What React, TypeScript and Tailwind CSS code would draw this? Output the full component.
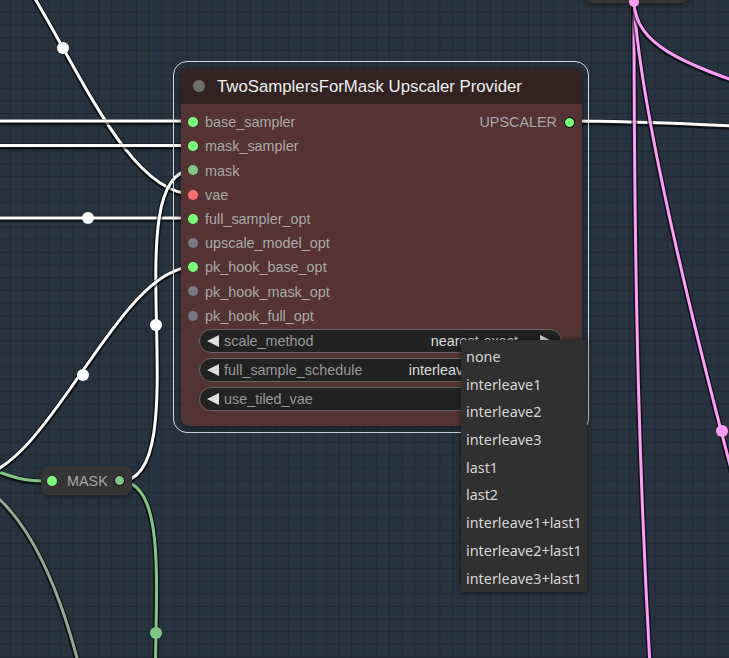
import React from 'react';

const SLOTS = [
  { name: 'base_sampler', color: '#77ff77' },
  { name: 'mask_sampler', color: '#77ff77' },
  { name: 'mask', color: '#81c784' },
  { name: 'vae', color: '#ff6e6e' },
  { name: 'full_sampler_opt', color: '#77ff77' },
  { name: 'upscale_model_opt', color: '#777788' },
  { name: 'pk_hook_base_opt', color: '#77ff77' },
  { name: 'pk_hook_mask_opt', color: '#777788' },
  { name: 'pk_hook_full_opt', color: '#777788' },
];

// the last widget's value sits under the open menu, so it is left blank
const WIDGETS = [
  { label: 'scale_method', value: 'nearest-exact' },
  { label: 'full_sample_schedule', value: 'interleave1+last1' },
  { label: 'use_tiled_vae', value: '' },
];

const OPTIONS = [
  'none',
  'interleave1',
  'interleave2',
  'interleave3',
  'last1',
  'last2',
  'interleave1+last1',
  'interleave2+last1',
  'interleave3+last1',
];

function Wire({ d, color }: { d: string; color: string }) {
  return (
    <g>
      <path d={d} fill="none" stroke="rgba(0,0,0,0.6)" strokeWidth={6} transform="translate(0,1)" />
      <path d={d} fill="none" stroke={color} strokeWidth={3} />
    </g>
  );
}

function Wires() {
  return (
    <svg className="absolute inset-0" width={729} height={658} viewBox="0 0 729 658">
      <line x1={157} y1={0} x2={157} y2={658} stroke="#25335a" strokeWidth={1} />
      {/* sage wire bottom-left */}
      <Wire d="M -60 470 C 10 478, 55 560, 85 690" color="#93a993" />
      {/* green into MASK */}
      <Wire d="M -50 455 C 0 470, 10 481, 45 481" color="#81c784" />
      {/* MASK output going down */}
      <Wire d="M 120 481 C 198 481, 114 785, 192 785" color="#81c784" />
      {/* white links */}
      <Wire d="M -67 -98 C 31 -98, 95 194, 193 194" color="#ffffff" />
      <Wire d="M 0 121 L 193 121" color="#ffffff" />
      <Wire d="M 0 145.5 L 193 145.5" color="#ffffff" />
      <Wire d="M 0 218 L 193 218" color="#ffffff" />
      <Wire d="M 120 481 C 200 481, 113 170, 193 170" color="#ffffff" />
      <Wire d="M -30 478 C 47 478, 116 267, 193 267" color="#ffffff" />
      <Wire d="M 569 121 C 650 121, 700 125, 760 127" color="#ffffff" />
      {/* pink links */}
      <Wire d="M 634 2 C 634 300, 640 500, 652 700" color="#ff9cf9" />
      <Wire d="M 634 2 Q 642 140 750 540" color="#ff9cf9" />
      <Wire d="M 634 2 C 636 45, 680 62, 760 90" color="#ff9cf9" />
      {/* midpoints */}
      <circle cx={63} cy={48} r={6} fill="#ffffff" />
      <circle cx={88} cy={218} r={6} fill="#ffffff" />
      <circle cx={156} cy={325} r={6} fill="#ffffff" />
      <circle cx={83} cy={375} r={6} fill="#ffffff" />
      <circle cx={156} cy={633} r={6} fill="#81c784" />
      <circle cx={722} cy={431} r={6} fill="#ff9cf9" />
    </svg>
  );
}

function Arrow({ dir }: { dir: 'left' | 'right' }) {
  return (
    <svg width={12} height={12} viewBox="0 0 12 12" className="shrink-0">
      {dir === 'left' ? <polygon points="12,0 12,12 0,6" fill="#dddddd" /> : <polygon points="0,0 0,12 12,6" fill="#dddddd" />}
    </svg>
  );
}

function Widget({ label, value }: { label: string; value: string }) {
  return (
    <div className="ml-[18px] flex h-[24px] w-[363px] items-center rounded-full border border-[#666] bg-[#222] pl-[7px] pr-[9px] text-[14.4px]">
      <Arrow dir="left" />
      <span className="ml-[5px] translate-y-[1px] text-[#999]">{label}</span>
      <span className="ml-auto translate-y-[1px] text-[#ddd]">{value}</span>
      <span className="ml-[22px]">
        <Arrow dir="right" />
      </span>
    </div>
  );
}

function UpscalerNode() {
  return (
    <>
      <div className="absolute left-[173px] top-[61px] h-[372px] w-[416px] rounded-[14px] border border-[#d4d8dc]" />
      <div className="absolute left-[181px] top-[68px] flex h-[358px] w-[401px] flex-col overflow-hidden rounded-[8px] bg-[#553333] shadow-[0_2px_6px_rgba(0,0,0,0.5)]">
        <div className="flex h-[36px] shrink-0 items-center bg-[#332222] pl-[12px]">
          <span className="h-[12px] w-[12px] rounded-full bg-[#6f6f6f]" />
          <span className="ml-[12px] translate-y-[1px] text-[16.8px] text-[#eeeeee]">TwoSamplersForMask Upscaler Provider</span>
        </div>
        <div className="flex flex-col pt-[6px]">
          {SLOTS.map((slot, i) => (
            <div key={slot.name} className="flex h-[24.2px] items-center pl-[7px] text-[14.4px] text-[#aaa]">
              <span className="h-[10px] w-[10px] rounded-full" style={{ backgroundColor: slot.color }} />
              <span className="ml-[7px] translate-y-[1px]">{slot.name}</span>
              {i === 0 && (
                <>
                  <span className="ml-auto translate-y-[1px]">UPSCALER</span>
                  <span className="ml-[7px] mr-[7px] h-[11px] w-[11px] rounded-full border border-black bg-[#77ff77]" />
                </>
              )}
            </div>
          ))}
        </div>
        <div className="mt-[1px] flex flex-col gap-[5px]">
          {WIDGETS.map((w) => (
            <Widget key={w.label} label={w.label} value={w.value} />
          ))}
        </div>
      </div>
    </>
  );
}

function MaskNode() {
  return (
    <div className="absolute left-[41px] top-[466px] flex h-[29px] w-[91px] items-center rounded-[8px] bg-[#353535] pl-[6px] text-[14.4px] text-[#a6a6a6] shadow-[0_2px_5px_rgba(0,0,0,0.4)]">
      <span className="h-[10px] w-[10px] rounded-full bg-[#77ff77]" />
      <span className="ml-[10px] translate-y-[1px]">MASK</span>
      <span className="ml-auto mr-[7px] h-[11px] w-[11px] rounded-full border border-black bg-[#81c784]" />
    </div>
  );
}

function TopNode() {
  return (
    <div className="absolute left-[584px] top-[-20px] h-[23px] w-[105px] rounded-[8px] bg-[#353535] shadow-[0_2px_5px_rgba(0,0,0,0.4)]">
      <span className="absolute left-[45px] top-[17px] h-[10px] w-[10px] rounded-full bg-[#ff9cf9]" />
    </div>
  );
}

function OptionMenu() {
  return (
    <div className="absolute left-[461px] top-[340px] flex h-[252px] w-[126px] flex-col bg-[#303030] pt-[3px] font-['Noto_Sans',sans-serif] text-[14.4px] text-[#d6d6d6] shadow-[0_0_6px_rgba(0,0,0,0.5)]">
      {OPTIONS.map((o) => (
        <div key={o} className="flex h-[27.7px] shrink-0 items-center px-[5px]">
          {o}
        </div>
      ))}
    </div>
  );
}

export default function App() {
  return (
    <div className="relative h-[658px] w-[729px] overflow-hidden bg-[#27333f] bg-[linear-gradient(to_right,#1f2a35_1px,transparent_1px),linear-gradient(to_bottom,#1f2a35_1px,transparent_1px)] bg-[size:12.65px_12.65px] bg-[position:9.7px_11.9px] font-['Liberation_Sans',Arial,sans-serif]">
      <Wires />
      <TopNode />
      <MaskNode />
      <UpscalerNode />
      <OptionMenu />
    </div>
  );
}
